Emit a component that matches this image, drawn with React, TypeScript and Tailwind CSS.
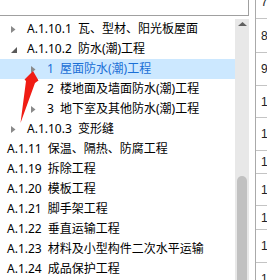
import React from "react";

type Row = { level: number; text: string; icon?: "closed" | "open"; selected?: boolean };

const rows: Row[] = [
  { level: 1, text: "A.1.10.1 瓦、型材、阳光板屋面", icon: "closed" },
  { level: 1, text: "A.1.10.2 防水(潮)工程", icon: "open" },
  { level: 2, text: "1 屋面防水(潮)工程", icon: "closed", selected: true },
  { level: 2, text: "2 楼地面及墙面防水(潮)工程" },
  { level: 2, text: "3 地下室及其他防水(潮)工程", icon: "closed" },
  { level: 1, text: "A.1.10.3 变形缝", icon: "closed" },
  { level: 0, text: "A.1.11 保温、隔热、防腐工程" },
  { level: 0, text: "A.1.19 拆除工程" },
  { level: 0, text: "A.1.20 模板工程" },
  { level: 0, text: "A.1.21 脚手架工程" },
  { level: 0, text: "A.1.22 垂直运输工程" },
  { level: 0, text: "A.1.23 材料及小型构件二次水平运输" },
  { level: 0, text: "A.1.24 成品保护工程" },
];

const cells = [
  { h: "h-[34px] -mt-[15px]", n: "7" },
  { h: "h-[34px]", n: "8" },
  { h: "h-[33px]", n: "9" },
  { h: "h-[32px]", n: "1" },
  { h: "h-[33px]", n: "1" },
  { h: "h-[23px]", n: "1" },
  { h: "h-[32px]", n: "1" },
  { h: "h-[24px]", n: "1" },
  { h: "h-[33px]", n: "1" },
  { h: "h-[33px]", n: "1" },
];

function Toggle({ kind }: { kind: "closed" | "open" }) {
  if (kind === "open") {
    return (
      <svg width="6" height="6" viewBox="0 0 6 6" className="mt-[2px]">
        <polygon points="6,0 6,6 0,6" fill="#5a5a5a" />
      </svg>
    );
  }
  return (
    <svg width="5" height="7" viewBox="0 0 5 7">
      <polygon points="0,0 4.5,3.5 0,7" fill="#8a8a8a" />
    </svg>
  );
}

function TreeRow({ row }: { row: Row }) {
  return (
    <div
      className={`flex h-[20px] items-center whitespace-nowrap ${
        row.selected ? "bg-[#cce8ff] text-[#1a6fd6]" : "text-[#000000]"
      }`}
    >
      {row.level === 0 ? (
        <div className="w-[7px] shrink-0" />
      ) : (
        <>
          <div className={`${row.level === 1 ? "w-[11px]" : "w-[31px]"} shrink-0`} />
          <div className="flex w-[16px] shrink-0 items-center">
            {row.icon && <Toggle kind={row.icon} />}
          </div>
        </>
      )}
      <span className="[word-spacing:3px]">{row.text}</span>
    </div>
  );
}

export default function App() {
  return (
    <div className="relative flex h-[280px] w-[267px] overflow-hidden bg-white font-['Noto_Sans','Noto_Sans_CJK_SC',sans-serif] text-[12px] leading-[20px]">
      <div className="flex w-[249px] shrink-0 flex-col">
        {/* top input box */}
        <div className="h-[16px] border-b border-r border-[#a0a0a0] bg-white" />

        <div className="mt-[3px] flex flex-1 overflow-hidden">
          <div className="w-[235px] shrink-0 overflow-hidden">
            {rows.map((r, i) => (
              <TreeRow key={i} row={r} />
            ))}
          </div>

          {/* scrollbar */}
          <div className="flex w-[14px] shrink-0 flex-col items-center bg-[#e8e8e8]">
            <svg width="9" height="4" viewBox="0 0 9 4" className="mt-[3px]">
              <polygon points="4.5,0 9,4 0,4" fill="#606060" />
            </svg>
            <div className="h-[150px] shrink-0" />
            <div className="w-[10px] flex-1 rounded-t-full bg-[#c1c1c1]" />
          </div>
        </div>
      </div>

      <div className="w-[6px] shrink-0" />

      {/* neighbouring grid column */}
      <div className="flex flex-1 flex-col border-l border-[#aaaaaa] font-['Liberation_Sans',sans-serif]">
        {cells.map((c, i) => (
          <div
            key={i}
            className={`${c.h} flex shrink-0 items-center border-b border-[#c4c4c4] pl-[5px] text-[12px] text-[#222222]`}
          >
            {c.n}
          </div>
        ))}
      </div>

      {/* red annotation arrow */}
      <svg
        className="pointer-events-none absolute left-0 top-0"
        width="267"
        height="280"
        viewBox="0 0 267 280"
      >
        <polygon points="33,71 38.5,80.5 35,83 20.5,123 26,81 24.5,79.5" fill="#f01c14" />
      </svg>
    </div>
  );
}
